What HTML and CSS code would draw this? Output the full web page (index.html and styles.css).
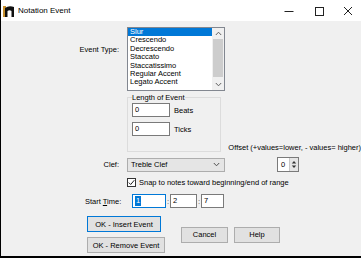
FILE: index.html
```html
<!DOCTYPE html>
<html>
<head>
<meta charset="utf-8">
<title>Notation Event</title>
<link rel="stylesheet" href="styles.css">
</head>
<body>
<div class="window">
  <div class="titlebar">
    <svg class="appicon" width="12" height="12" viewBox="0 0 12 12">
      <rect x="0" y="1" width="3" height="11" fill="#c8902c"/>
      <path d="M2 12 V3 Q6 0 11 2 V12 H8.5 V6 Q6.5 4.5 4.5 6 V12 Z" fill="#111"/>
    </svg>
    <span class="title">Notation Event</span>
    <div class="controls">
      <div class="ctl"><svg width="10" height="10" viewBox="0 0 10 10"><path d="M0.5 5.5 H9.5" stroke="#222" stroke-width="1"/></svg></div>
      <div class="ctl"><svg width="10" height="10" viewBox="0 0 10 10"><rect x="1.5" y="1.5" width="8" height="8" fill="none" stroke="#222" stroke-width="1"/></svg></div>
      <div class="ctl ctl-close"><svg width="10" height="10" viewBox="0 0 10 10"><path d="M1 1 L9 9 M9 1 L1 9" stroke="#222" stroke-width="1"/></svg></div>
    </div>
  </div>

  <div class="client">
    <div class="row r-type">
      <div class="lbl lbl-type">Event Type:</div>
      <div class="listbox">
        <ul class="items">
          <li class="sel">Slur</li>
          <li>Crescendo</li>
          <li>Decrescendo</li>
          <li>Staccato</li>
          <li>Staccatissimo</li>
          <li>Regular Accent</li>
          <li>Legato Accent</li>
        </ul>
        <div class="vscroll">
          <div class="sb-arrow"><svg width="7" height="5" viewBox="0 0 7 5"><path d="M0.8 4 L3.5 1.2 L6.2 4" fill="none" stroke="#606060" stroke-width="1"/></svg></div>
          <div class="sb-thumb"></div>
          <div class="sb-space"></div>
          <div class="sb-arrow"><svg width="7" height="5" viewBox="0 0 7 5"><path d="M0.8 1 L3.5 3.8 L6.2 1" fill="none" stroke="#606060" stroke-width="1"/></svg></div>
        </div>
      </div>
    </div>

    <div class="row r-group">
      <div class="lbl"></div>
      <fieldset class="group">
        <legend>Length of Event</legend>
        <div class="field"><span class="edit">0</span><span class="unit">Beats</span></div>
        <div class="field field-2"><span class="edit">0</span><span class="unit">Ticks</span></div>
      </fieldset>
      <div class="offset-label">Offset (+values=lower, - values= higher)</div>
    </div>

    <div class="row r-clef">
      <div class="lbl lbl-clef">Clef:</div>
      <div class="combo">
        <span>Treble Clef</span>
        <svg class="chev" width="7" height="5" viewBox="0 0 7 5"><path d="M0.8 1 L3.5 3.8 L6.2 1" fill="none" stroke="#505050" stroke-width="1"/></svg>
      </div>
      <div class="spin">
        <span class="spin-val">0</span>
        <span class="spin-btns">
          <svg width="9" height="13" viewBox="0 0 9 13"><path d="M2 5.5 L4.5 2.5 L7 5.5 Z M2 7.5 L4.5 10.5 L7 7.5 Z" fill="#333"/></svg>
        </span>
      </div>
    </div>

    <div class="row r-snap">
      <div class="lbl"></div>
      <span class="check"><svg width="7" height="7" viewBox="0 0 7 7"><path d="M0.8 3.6 L2.7 5.5 L6.3 1.2" fill="none" stroke="#222" stroke-width="1"/></svg></span>
      <span class="snap-text">Snap to notes toward beginning/end of range</span>
    </div>

    <div class="row r-time">
      <div class="lbl-time">Start <u>T</u>ime:</div>
      <span class="edit t1 focus"><span class="hl">1</span></span>
      <span class="colon">:</span>
      <span class="edit t2">2</span>
      <span class="colon">:</span>
      <span class="edit t3">7</span>
    </div>

    <div class="row r-buttons">
      <div class="btn-col">
        <button class="btn btn-default btn-insert">OK - Insert Event</button>
        <button class="btn btn-remove">OK - Remove Event</button>
      </div>
      <button class="btn btn-cancel">Cancel</button>
      <button class="btn btn-help">Help</button>
    </div>
  </div>
</div>
</body>
</html>
```

FILE: styles.css
```css
* { box-sizing: border-box; }

html, body {
  margin: 0;
  padding: 0;
}

body {
  width: 361px;
  height: 258px;
  overflow: hidden;
  background: #f0f0f0;
  font-family: "Liberation Sans", Arial, sans-serif;
  font-size: 7.5px;
  color: #000;
}

.window {
  height: 258px;
  border-left: 1px solid #000;
  border-bottom: 2px solid #000;
  background: #f0f0f0;
  display: flex;
  flex-direction: column;
}

/* Title bar */
.titlebar {
  height: 21px;
  flex: none;
  background: #fff;
  display: flex;
  align-items: center;
}

.appicon {
  margin-left: 2px;
  flex: none;
}

.title {
  margin-left: 3px;
  font-size: 8px;
}

.controls {
  margin-left: auto;
  display: flex;
}

.ctl {
  width: 30px;
  height: 21px;
  display: flex;
  align-items: center;
  justify-content: center;
}

.ctl-close { width: 27px; }

/* Client area */
.client {
  flex: 1;
  display: flex;
  flex-direction: column;
}

.row {
  display: flex;
  flex: none;
}

.lbl {
  width: 126px;
  flex: none;
  text-align: right;
  padding-right: 8px;
  white-space: nowrap;
}

/* Event type list */
.r-type { margin-top: 6px; }

.lbl-type { padding-top: 18px; }

.listbox {
  width: 98px;
  height: 64px;
  border: 1px solid #828790;
  background: #fff;
  display: flex;
}

.items {
  list-style: none;
  margin: 0;
  padding: 0;
  flex: 1;
  min-width: 0;
}

.items li {
  height: 8.4px;
  line-height: 8.4px;
  padding-left: 2px;
  white-space: nowrap;
}

.items li.sel {
  background: #0078d7;
  color: #fff;
}

.vscroll {
  width: 12px;
  flex: none;
  background: #f0f0f0;
  display: flex;
  flex-direction: column;
}

.sb-arrow {
  height: 11px;
  display: flex;
  align-items: center;
  justify-content: center;
}

.sb-thumb {
  height: 38px;
  margin: 0 1px;
  background: #cdcdcd;
}

.sb-space { flex: 1; }

/* Length of event group */
.r-group { margin-top: 2px; }

.group {
  width: 98px;
  margin: 0;
  padding: 1px 0 15px 4px;
  border: 1px solid #dcdcdc;
  min-width: 0;
}

.group legend {
  padding: 0;
  line-height: 9px;
}

.field {
  display: flex;
  align-items: center;
}

.field-2 { margin-top: 5px; }

.edit {
  display: block;
  height: 14px;
  border: 1px solid #7a7a7a;
  background: #fff;
  padding-left: 2px;
  line-height: 12px;
}

.field .edit { width: 38px; }

.unit { margin-left: 4px; }

.offset-label {
  align-self: flex-end;
  margin-left: 7px;
  white-space: nowrap;
  line-height: 9px;
}

/* Clef */
.r-clef {
  margin-top: 5px;
  align-items: center;
}

.combo {
  width: 98px;
  height: 14px;
  border: 1px solid #adadad;
  background: #e5e5e5;
  display: flex;
  align-items: center;
  padding-left: 3px;
}

.combo .chev {
  margin-left: auto;
  margin-right: 4px;
}

.spin {
  margin-left: 52px;
  width: 22px;
  height: 15px;
  border: 1px solid #7a7a7a;
  background: #fff;
  display: flex;
}

.spin-val {
  flex: 1;
  padding-left: 3px;
  line-height: 13px;
}

.spin-btns {
  width: 9px;
  background: #e5e5e5;
  border-left: 1px solid #c8c8c8;
  display: flex;
  align-items: center;
  justify-content: center;
}

/* Snap checkbox */
.r-snap {
  margin-top: 6px;
  align-items: center;
}

.check {
  width: 9px;
  height: 9px;
  border: 1px solid #333;
  background: #fff;
  display: flex;
  align-items: center;
  justify-content: center;
}

.snap-text {
  margin-left: 3px;
  white-space: nowrap;
}

/* Start time */
.r-time {
  margin-top: 7px;
  align-items: center;
}

.lbl-time {
  margin-left: 84px;
  width: 47px;
  flex: none;
  white-space: nowrap;
}

.lbl-time u { text-decoration-thickness: 1px; }

.t1 { width: 34px; }
.t2 { width: 27px; }
.t3 { width: 23px; }

.focus { border-color: #0078d7; }

.hl {
  background: #0078d7;
  color: #fff;
  padding: 0 1px;
  display: inline-block;
  line-height: 10px;
}

.colon {
  width: 4px;
  text-align: center;
  color: #444;
}

/* Buttons */
.r-buttons {
  margin-top: 8px;
  align-items: center;
}

.btn-col {
  margin-left: 86px;
  display: flex;
  flex-direction: column;
  gap: 5px;
}

.btn {
  height: 16px;
  padding: 0;
  margin: 0;
  border: 1px solid #adadad;
  background: #e1e1e1;
  font-family: "Liberation Sans", Arial, sans-serif;
  font-size: 7.5px;
  color: #000;
  white-space: nowrap;
}

.btn-default { border-color: #0078d7; }

.btn-insert { width: 74px; }
.btn-remove { width: 78px; }

.btn-cancel {
  width: 47px;
  margin-left: 16px;
}

.btn-help {
  width: 46px;
  margin-left: 6px;
}
```
